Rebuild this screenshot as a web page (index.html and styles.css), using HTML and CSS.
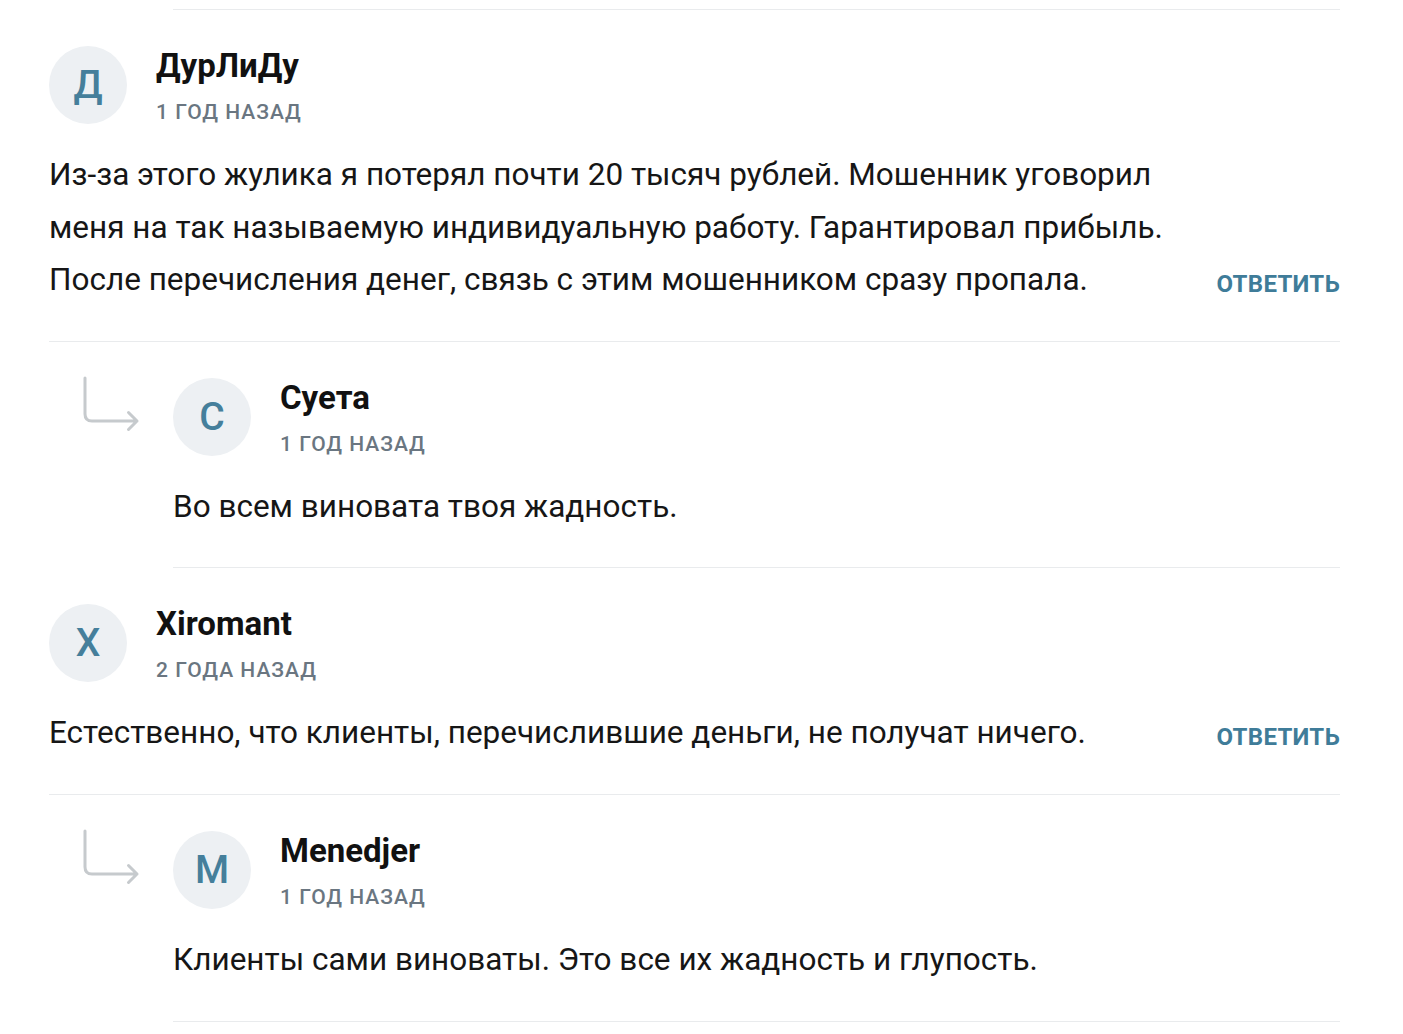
FILE: index.html
```html
<!DOCTYPE html>
<html lang="ru">
<head>
<meta charset="utf-8">
<title>Комментарии</title>
<link rel="stylesheet" href="styles.css">
</head>
<body>
<div class="comments">
  <div class="prev-tail"></div>

  <div class="comment">
    <div class="head">
      <div class="avatar">Д</div>
      <div class="meta">
        <div class="name">ДурЛиДу</div>
        <div class="date">1 год назад</div>
      </div>
    </div>
    <div class="body-row">
      <p class="text">Из-за этого жулика я потерял почти 20 тысяч рублей. Мошенник уговорил меня на так называемую индивидуальную работу. Гарантировал прибыль. После перечисления денег, связь с этим мошенником сразу пропала.</p>
      <a class="reply-link" href="#">Ответить</a>
    </div>
  </div>

  <div class="reply-row">
    <div class="gutter">
      <svg class="reply-arrow" width="58" height="58" viewBox="0 0 58 58" aria-hidden="true">
        <path d="M2 2 V38 Q2 45 9 45 H54 M45.5 36.5 L54 45 L45.5 53.5" fill="none" stroke="#c6cacd" stroke-width="3" stroke-linecap="round" stroke-linejoin="round"/>
      </svg>
    </div>
    <div class="comment">
      <div class="head">
        <div class="avatar">С</div>
        <div class="meta">
          <div class="name">Суета</div>
          <div class="date">1 год назад</div>
        </div>
      </div>
      <div class="body-row">
        <p class="text">Во всем виновата твоя жадность.</p>
      </div>
    </div>
  </div>

  <div class="comment">
    <div class="head">
      <div class="avatar">X</div>
      <div class="meta">
        <div class="name">Xiromant</div>
        <div class="date">2 года назад</div>
      </div>
    </div>
    <div class="body-row">
      <p class="text">Естественно, что клиенты, перечислившие деньги, не получат ничего.</p>
      <a class="reply-link" href="#">Ответить</a>
    </div>
  </div>

  <div class="reply-row">
    <div class="gutter">
      <svg class="reply-arrow" width="58" height="58" viewBox="0 0 58 58" aria-hidden="true">
        <path d="M2 2 V38 Q2 45 9 45 H54 M45.5 36.5 L54 45 L45.5 53.5" fill="none" stroke="#c6cacd" stroke-width="3" stroke-linecap="round" stroke-linejoin="round"/>
      </svg>
    </div>
    <div class="comment">
      <div class="head">
        <div class="avatar">M</div>
        <div class="meta">
          <div class="name">Menedjer</div>
          <div class="date">1 год назад</div>
        </div>
      </div>
      <div class="body-row">
        <p class="text">Клиенты сами виноваты. Это все их жадность и глупость.</p>
      </div>
    </div>
  </div>
</div>
</body>
</html>
```
FILE: styles.css
```css
html, body {
  margin: 0;
  padding: 0;
  background: #ffffff;
}

body {
  font-family: Roboto, "Noto Sans", "Liberation Sans", sans-serif;
  color: #161616;
}

.comments {
  width: 1291px;
  margin-left: 49px;
}

.prev-tail {
  height: 9px;
  margin-left: 124px;
  border-bottom: 1px solid #e9ebed;
}

.comment {
  flex: 1;
  padding: 36px 0 34.2px;
  border-bottom: 1px solid #e9ebed;
}

.head {
  display: flex;
  align-items: flex-start;
}

.avatar {
  width: 78px;
  height: 78px;
  flex: none;
  border-radius: 50%;
  background: #edf0f3;
  color: #457f9b;
  font-size: 39px;
  font-weight: 500;
  line-height: 78px;
  text-align: center;
}

.meta {
  margin-left: 29px;
}

.name {
  font-size: 33px;
  line-height: 40px;
  font-weight: 700;
  color: #111111;
}

.date {
  margin-top: 12px;
  font-size: 21px;
  line-height: 28px;
  font-weight: 500;
  color: #6a7681;
  text-transform: uppercase;
  letter-spacing: 1px;
}

.body-row {
  display: flex;
  align-items: flex-end;
  justify-content: space-between;
  margin-top: 23px;
}

.text {
  margin: 0;
  width: 1140px;
  font-size: 31.5px;
  line-height: 52.5px;
  color: #161616;
}

.reply-link {
  flex: none;
  font-size: 24px;
  line-height: 46px;
  font-weight: 700;
  color: #3f7c99;
  text-transform: uppercase;
  text-decoration: none;
  letter-spacing: 0.3px;
}

.reply-row {
  display: flex;
}

.gutter {
  width: 124px;
  flex: none;
}

.reply-arrow {
  display: block;
  margin: 34px 0 0 34px;
}
```
